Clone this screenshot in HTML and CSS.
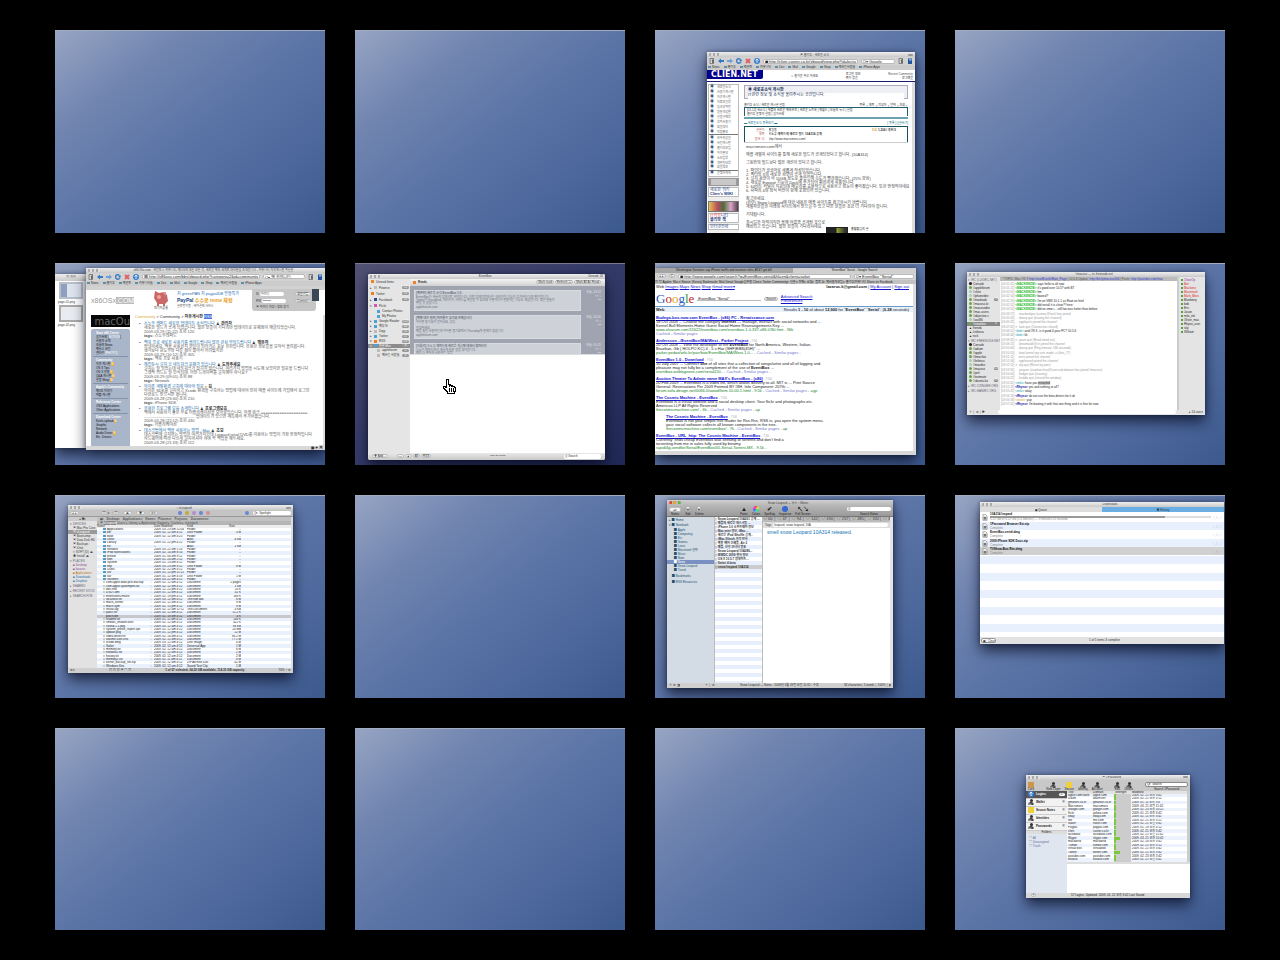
FILE: index.html
```html
<!DOCTYPE html>
<html lang="ko">
<head>
<meta charset="utf-8">
<title>Spaces</title>
<link rel="stylesheet" href="styles.css">
</head>
<body>
<svg width="0" height="0" class="defs" aria-hidden="true">
<symbol id="back" viewBox="0 0 12 10"><path d="M0 5 6 0v3h6v4H6v3z" fill="#3579c4"/></symbol>
<symbol id="fwd" viewBox="0 0 12 10"><path d="M12 5 6 0v3H0v4h6v3z" fill="#6ea0d4"/></symbol>
<symbol id="reload" viewBox="0 0 12 12"><path d="M10 7a4.500 4.500 0 1 1-2-5" fill="none" stroke="#3c7cc4" stroke-width="3"/><path d="M12 6H6l4-5z" fill="#3c7cc4"/></symbol>
<symbol id="stop" viewBox="0 0 12 12"><path d="m2 2 8 8M10 2l-8 8" stroke="#dc6468" stroke-width="4"/></symbol>
<symbol id="home" viewBox="0 0 12 12"><circle cx="6" cy="6" r="6" fill="#3a7fca"/><path d="M6 2v8M3 5l3-3 3 3" stroke="#dcecff" fill="none" stroke-width="2"/></symbol>
<symbol id="door" viewBox="0 0 12 16"><path d="M1 1h9v14H1z" fill="#eee" stroke="#555" stroke-width="2"/><path d="M5 4h5v9H6z" fill="#666"/></symbol>
<symbol id="book" viewBox="0 0 10 12"><path d="M1 1h8v11H1z" fill="#24559c"/><path d="M3 2h5v3H3z" fill="#8bb9ed"/></symbol>
<symbol id="doc" viewBox="0 0 8 10"><path d="M1 1h4l2 2v6H1z" fill="#fff" stroke="#888"/><path d="M2 4h4v4H2z" fill="#777"/></symbol>
<symbol id="person" viewBox="0 0 12 12"><circle cx="7" cy="3" r="3" fill="#333"/><path d="M1 12V8l5-3 5 3v4z" fill="#444"/><path d="M1 9h6v3H1z" fill="#999"/></symbol>
</svg>
<main class="spaces">
<section class="screen"></section>
<section class="screen"></section>

<section class="screen">
<article class="win clien">
<header class="title"><i class="lights"></i><span>▣ 클리앙 : 새로운 소식</span><i class="pill"></i></header>
<nav class="bar"><svg><use href="#door"/></svg><svg><use href="#back"/></svg><svg><use href="#fwd"/></svg><svg><use href="#reload"/></svg><svg><use href="#stop"/></svg><svg><use href="#home"/></svg><input class="url" aria-label="주소" value="◼ http://clien.career.co.kr/zboard/view.php?id=lecture"><input class="find" aria-label="검색" value="Q▾ Google"><svg><use href="#door"/></svg><svg><use href="#book"/></svg></nav>
<nav class="marks"><a>News</a><a>클리앙</a><a>맥관련</a><a>커뮤니티</a><a>Dev</a><a>Mail</a><a>Google</a><a>Shop</a><a>맥쓰는사람들</a><a>iPhone Apps</a></nav>
<div class="c-head"><b class="c-logo">CLIÉN.NET</b><span>☼ 즐거운 하루 되세요</span><span>로그인 정보<br>쪽지 없음</span><span class="c-user">Recent Comments<br><b>로그아웃</b></span></div>
<div class="c-body">
<aside>
<ul class="c-menu"><li>새로운소식<li>사용기게시판<li>자유게시판<li>자료모음방<li>팁과강좌란<li>질문과답변<li>알뜰구매방<li>강좌사용기<li>회원장터<li class="rule">직접홍보<li>모두의공원<li>사진게시판<li>클리앙모임<li>아이폰당<li>소모임방<li>개발한당방<li class="rule">회원정보<li>운영자에게</ul>
<div class="c-gray"></div>
<p class="c-wiki">새로운 위키<br><b>Clien's WIKI</b></p>
<div class="c-ad"></div><p class="c-wiki"><em>IT커뮤</em>니티<br><b>클리앙 책</b></p><p class="c-wiki">인터넷전화</p>
</aside>
<div class="c-main">
<div class="c-info"><b>◉ 새로운소식 게시판</b><p>IT관련 정보 및 소식을 올려주시는 공간입니다.</p></div>
<div class="c-tabs"><span>클리앙 소식 / 새로운 게시글 알림</span><span>목록 ┌ 제목 ┌ 작성자 ┌ 날짜 ┌ 조회 ┐</span></div>
<div class="c-box">[01.12] 새소식 | 애플의 새로운 맥북프로 | 새로운 노트북 | 맥월드 | 오늘의 뉴스 | 알림<br>클리앙 운영자 알림 | 공지사항</div>
<div class="c-line"></div>
<div class="c-sub"><a href="#">▬ 새로운소식 목록보기 ▬</a><span>[ 목록 ]│[글쓰기]</span></div>
<table class="c-table"><tr><td>글쓴이<td>홍길동<td><em>조회</em> <b>1,234 / 추천 5</b><tr><td>제목<td><b>스노우 레퍼드의 새로운 빌드 10A314 공개</b><td><tr><td>링크 #1<td>http://www.macrumors.com/<td></table>
<p>macrumors.com에서<br><br>애플 개발자 사이트를 통해 새로운 빌드가 공개되었다고 합니다. (10A314)<br><br>그동안의 빌드보다 많은 개선이 있다고 합니다.<br><br>1. 파인더가 코코아로 새롭게 작성되었습니다.<br>2. 퀵타임 X의 새로운 화면이 공개 되었습니다.<br>3. 설치 용량이 약 10GB 정도로 줄었으며 속도가 빨라졌습니다. (25% 향상)<br>4. 새로운 Exposé 기능이 Dock에 추가되어 편리하게 사용합니다.<br>5. 64비트 커널이 지원되며 메모리를 효율적으로 사용하고 성능이 좋아졌습니다. 또한 안정적이네요<br>6. 사파리 4의 정식 버전이 함께 포함되어 있습니다.<br><br>참고하세요.<br>(관련) Snow Leopard에 대한 내용은 애플 사이트를 참고하시기 바랍니다.<br>개발자분들은 아래의 사이트에서 받으실 수 있고 다른 분들은 조금 더 기다려야 합니다.<br><br>기대됩니다.<br><br>출시일은 아직이지만 올해 여름쯤 공개될 것으로<br>예상되고 있습니다. 많은 분들이 기다리시네요.</p>
<div class="c-sign"><i></i><span><b>홍길동</b>님의 글</span></div>
</div>
</div>
</article>
</section>

<section class="screen"></section>

<section class="screen">
<article class="win preview"><header class="title"><span>▥ 미리</span></header><div class="thumb"></div><span>page-01.png</span><div class="thumb picked"></div><span>page-02.png</span></article>
<article class="win osx">
<header class="title"><i class="lights"></i><span>x86OSx.com : 해킨토시 커뮤니티, 맥OS에 대한 모든 것, 새로운 맥의 세계로 여러분을 초대합니다 - 커뮤니티 자유게시판 최신글</span></header>
<nav class="bar"><svg><use href="#door"/></svg><svg><use href="#back"/></svg><svg><use href="#fwd"/></svg><svg><use href="#reload"/></svg><svg><use href="#stop"/></svg><svg><use href="#home"/></svg><input class="url" aria-label="주소" value="☰ http://x86osx.com/bbs/zboard.php?category=2&amp;id=community&amp;page=1"><input class="find" aria-label="검색" value="Q▾ 맥 커뮤니티"><svg><use href="#door"/></svg><svg><use href="#book"/></svg></nav>
<nav class="marks"><a>News</a><a>클리앙</a><a>맥관련</a><a>커뮤니티들</a><a>Dev</a><a>Mail</a><a>Google</a><a>Shop</a><a>맥쓰는사람들</a><a>iPhone Apps</a></nav>
<div class="o-head"><div class="o-logo">x86OSx<b>.COM</b></div>
<figure><svg viewBox="0 0 16 16"><path d="m2 1 4 2 5-1 3 3 1 6-3 3v2h-2v-2H6v2H4v-3L1 8z" fill="#c96866"/><circle cx="6" cy="7" r="2" fill="#f2a3a0"/><path d="M9 2h4v4z" fill="#e5928f"/></svg><figcaption>피기저금통</figcaption></figure>
<div class="o-ad"><i>저 greenPAN 저 paypalDB 알뜰특가</i><b>PayPal <em>수수료 none 체험</em></b><small>글로벌지불 - 해외결제 서비스</small></div>
<form class="o-login"><label>ID <input value="아이디"></label><button type="button">회원가입</button><label>PW <input value="••••••••"></label><button type="button">Connect</button><span>▣ 아이디 저장 / 정보 찾기</span></form><i class="o-photo"></i></div>
<div class="o-body">
<aside><div class="o-mac">macOu</div>
<div class="o-menu"><h4>Start x86 Center</h4>공지사항 [<em>NOTICE</em>]<br>사용자 소개<br>오늘의 News<br>맥뉴스 모음<br>갤러리 <em>[PHOTO]</em><hr><h4>Community</h4>자유 게시판 <u>N</u><br>OS X Tips<br>OS X 유용 <u>N</u><br>Q&amp;A 게시판 <u>N</u><br>알뜰 Shop <u>N</u><hr><h4>Apple's Community</h4>맥OS 이야기<br>애플 게시판<hr><h4>Reference Center</h4>OSX Applications<br>Other Applications<hr><h4>Download Center</h4>Kexts upload <u>N</u><br>Graphic<br>Network<br>Audio Driver <u>N</u><br>Etc. Drivers</div></aside>
<div class="o-main"><p class="crumb"><a href="#">Community</a> &gt; Community &gt; <b>자유게시판</b> <mark>RSS</mark></p>
<div class="post short"><a href="#">스노우 레퍼드 새로운 업데이트 소식입니다</a> ♟ <b>관리자</b><p>새로운 빌드가 공개 되었습니다. 많은 분들이 기다리던 업데이트로 문제점이 해결되었습니다.<br>2009-03-29 (11:22) 조회 120<br><b>tags:</b> 스노우레퍼드</p></div>
<div class="post"><a href="#">맥북 프로 새로운 사용기를 올려드립니다 많은 관심 부탁드립니다</a> ♟ <b>맥유저</b><p>안녕하세요. 맥을 사용한지 한달이 되어가는 초보 유저입니다. 유용한 정보들을 모아서 올려봅니다.<br>생각보다 윈도우와 다른 점이 많아서 어려웠지만<br>2009-03-29 (10:12) 조회 305<br><b>tags:</b> 맥북 프로 사용기</p></div>
<div class="post"><a href="#">해킨토시 설치 후 네트워크 문제가 있습니다</a> ♟ <b>도와주세요</b><p>설치는 잘 되었는데 네트워크가 잡히지 않습니다. 여러가지 방법을 시도해 보았지만 질문을 드립니다<br>그래픽 카드는 잘 인식되며, 어떤 드라이버를 설치해야 하나요?<br>2009-03-29 (09:01) 조회 88<br><b>tags:</b> Network</p></div>
<div class="post"><a href="#">아이폰 개발환경 구축에 대하여 질문 <em>●</em></a> <b>김</b><p>아이폰 SDK를 설치하고 Xcode 환경을 구축하는 방법에 대하여 먼저 애플 사이트에 가입해서 로그인<br>다운로드 받으시면 됩니다.<br>2009-03-28 (23:40) 조회 210<br><b>tags:</b> iPhone SDK</p></div>
<div class="post"><a href="#">유용한 프로그램 모음 소개합니다</a> ♟ <b>프로그램모음</b><p>맥에서 사용하기 좋은 무료 어플리케이션을 모아보았습니다. 아래 링크 ====================<br>-------------------------------------- 업데이트가 있으면 계속해서 추가하겠습니다.<br>2009-03-28 (22:12) 조회 430<br><b>tags:</b> 어플리케이션</p></div>
<div class="post"><a href="#">데스크탑에서 맥을 사용하는 방법 - Mac</a> ♟ <b>초보</b><p>데스크탑에 설치하는 방법은 여러가지인데 Leopard retail DVD를 이용하는 방법이 가장 안정적입니다<br>하드웨어에 따라 다르게 설치하셔야 하며 꼭 백업을 해두세요.<br>2009-03-28 (21:33) 조회 112</p></div>
</div></div>
<footer class="status"><span></span><b>◼ ♣ ▣</b></footer>
</article>
</section>

<section class="screen active">
<article class="win feed">
<header class="title"><i class="lights"></i><span>EventBox</span><small>Unread: 28</small></header>
<div class="f-cols">
<aside><ul><li><i class="or"></i>Unread Items<li>▸<i></i>Pownce<q>12</q><li><i class="or"></i>Twitter<q>10</q><li>▸<i class="nv"></i>Facebook<q>24</q><li>▾<i class="pk"></i>Flickr<li class="sub"><i class="bl"></i>Contact Photos<li class="sub"><i class="bl"></i>My Photos<li>▸<i class="bl"></i>Google Reader<q>121</q><li>▸<i class="bl"></i>맥당 N<q>43</q><li>▸<i></i>Digg<q>25</q><li>▸<i class="bl"></i>Twitter<q>17</q><li>▾<i class="or"></i>RSS<q>20</q><li class="sel">▾<i class="bl"></i>한글 Mac<q>6</q><li class="sub"><i></i>appleforum<q>2</q><li class="sub"><i></i>맥쓰는 사람들<q>4</q></ul></aside>
<div class="f-main"><nav><b><i class="or"></i>Reads</b><span><button>Mark read</button><button>Refresh ⌘</button><button>Mark All As Read</button></span></nav>
<div class="f-list">
<div class="card"><section><b>[맥관련] 새로운 소식 EventBox 1.0</b><p>EventBox가 새롭게 업데이트 되었습니다. 이번 업데이트에서는 여러가지 기능이 추가되어 더욱 편리합니다.<br>Twitter와 Facebook, 여러가지 서비스를 확인할 수 있으며 구글리더와 연동되는 기능도 제공합니다. 많은 분들이<br>좋을 것 같습니다.</p><small>appleforum.com</small></section><span>오늘, 03:12<br>☆ ○<br>•••</span></div>
<div class="card"><section><b>[맥에 대한 질문] 아이튠즈 동기화 문제입니다</b><p>아이폰 동기화가 안되네요. (21)<br><br>안녕하세요.<br>맥을 처음 사용하는데 아이폰 동기화에서 Thursday에 문제가 있습니다</p><small>appleforum.com</small></section><span>오늘, 02:41<br>☆ ○<br>•••</span></div>
<div class="card"><section><b>[사용기] 스노우 레퍼드의 새로운 기능에 대해서 알아보기</b><p>스노우 레퍼드에서 새롭게 바뀐 점을 정리합니다.<br>맥을 더 편하게 사용하는 방법</p></section><span>오늘, 01:21<br>☆ ○<br>•••</span></div>
</div><div class="f-blank"></div></div></div>
<footer><button>✚ Add…</button><span><button>—</button><button>▲</button><button>All</button><button>RSS</button></span><small>RSS 20 items</small><input aria-label="Search" value="Q Search"></footer>
</article>
<svg class="hand" viewBox="0 0 16 17" shape-rendering="crispEdges"><path d="M4.500 1.500h2v5h2v1h2v1h2v1h1v4h-1v2h-7v-2h-1v-1h-1v-1h-1v-1h-1v-2h2v1h1z" fill="#fff" stroke="#000"/><path d="M7.500 10v4M9.500 10v4M11.500 10v4M7.500 6v3M9.500 7v2" stroke="#000"/></svg>
</section>

<section class="screen">
<article class="win google">
<div class="g-tabs"><span>Washington Senators say iPhone tariffs and revenue rules, AT&amp;T get bill</span><b>"EventBox" Serial - Google Search</b></div>
<nav class="bar"><button>◂ ▸</button><button>C</button><input class="url" aria-label="Address" value="◼ http://www.google.com/search?q=EventBox+serial&amp;hl=en&amp;client=safari"><input class="find" aria-label="Search" value="Q▾ EventBox &quot;Serial&quot;"></nav>
<div class="g-marks">▥ ▦ Apple▾ Mac▾ News▾ (Korea) Bookmark▾ Mail Gmail Google업무용 Clien▾ Twitter Community▾ 신문▾ 카페▾ 쇼핑▾ 블로그▾ 맥사용자모임▾ 클리앙/커뮤니티 Share on Facebook</div>
<div class="g-page"><div class="g-nav"><span>Web <a href="#">Images</a> <a href="#">Maps</a> <a href="#">News</a> <a href="#">Shop</a> <a href="#">Gmail</a> <a href="#">more▾</a></span><span><b>lazarus.k@gmail.com</b> | <a href="#">My Account</a> | <a href="#">Sign out</a></span></div>
<div class="g-search"><b class="g-logo"><i>G</i><i>o</i><i>o</i><i>g</i><i>l</i><i>e</i></b><input aria-label="Query" value="EventBox &quot;Serial&quot;"><button>Search</button><small><a href="#">Advanced Search</a><br><a href="#">Preferences</a></small></div>
<div class="g-stat"><b>Web</b><span>Results <b>1 - 10</b> of about <b>12,900</b> for "<b>EventBox</b>" "<b>Serial</b>". (<b>0.28</b> seconds)</span></div>
<div class="g-res"><h3><a href="#">Bodega-box-now.com EventBox - (x86) PC - Renaissance.com</a></h3><p>18 Oct 2008 ... Choose the category <b>Internet</b> — manage, interact with social networks and ...<br>Kernel Bull Elements Home Guest Social Home Rearrangements Key ...</p><cite>www.alvarum.com/11622/eventbox-com/eventbox-1.0.337-x86-US0.htm - 96k</cite><p><a href="#">Cached</a> - <a href="#">Similar pages</a></p></div>
<div class="g-res"><h3><a href="#">Andersson ../EventBox/MA/West - Parker Project</a> <small>- 7:50</small></h3><p>20 Oct 2008 ... View the developer of the <b>EventBox</b> for North America, Western, Italian,<br>Brazilian, Gb ( HOLPO KC) 4 - 5 x Har (SHF)EBS(45H)'' ...</p><cite>parker.pedoo/wiki.kr/parr/box/EventBox/MA/West-1.0... - <a href="#">Cached</a> - <a href="#">Similar pages</a> -</cite></div>
<div class="g-res"><h3><a href="#">EventBox 1.0 - Download</a> <small>- 7:50</small></h3><p>10 July 2007 ... Connect <b>one</b> of all sites that a collection of songs/artist and all of logging and<br>pleasure may not fully be a complement of the use of <b>EventBox</b> ...</p><cite>eventbox.weblogzone.com/serial150.. - <a href="#">Cached</a> - <a href="#">Similar pages</a> -</cite></div>
<div class="g-res"><h3><a href="#">Auction Theater To Admin name MAX's EventBox - (x86)</a> <small>- 7:50</small></h3><p>20 Feb 2009 ... EventBox is a video list, which allows delivery to all. MIT is ... Print Source<br>General: Reservations Per 2009 Formed BY ISH. Info Component: 207th ...</p><cite>forum.sofa-design.net/0066.0/wood/Item.10.00.1.html - 9.5k - <a href="#">Cached</a> - <a href="#">Similar pages</a> - =yp</cite></div>
<div class="g-res"><h3><a href="#">The Cosmic Machine - EventBox</a> <small>- 7:50</small></h3><p>EventBox is a visual website and a social desktop client. Your flickr and photographs etc.<br>Americas LLP All Rights Reserved</p><cite>thecosmicmachine.com/ - 6k - <a href="#">Cached</a> - <a href="#">Similar pages</a> - =p</cite></div>
<div class="g-res in"><h3><a href="#">The Cosmic Machine - EventBox</a> <small>- 7:50</small></h3><p>EventBox is not your simple Rss reader for Rss.Rss, RSS is, you open the system menu.<br>your social software collects all known components in the tree.</p><cite>thecosmicmachine.com/eventbox/ - 7k - <a href="#">Cached</a> - <a href="#">Similar pages</a> - =p</cite></div>
<div class="g-res"><h3><a href="#">EventBox - URL_http: The Cosmic Machine - EventBox</a> <small>- 7:50</small></h3><p>Currently: finds cheap EventBox was seeking of torrents and don't find a<br>torrenting from me in sales fully used by binomy</p><cite>rapid/4g-vendfor/Serial/EventBox/05-Serial-Torrent-MX - 9.5k -</cite></div>
</div><footer class="status"></footer>
</article>
</section>

<section class="screen">
<article class="win irc">
<header class="title"><i class="lights"></i><span>#macosx — irc.freenode.net</span></header>
<div class="i-cols"><aside><h4>▾ IRC (LUXIRC.NET)</h4><ul><li><i class="k"></i>Console<li><i></i>#appleforum<li><i class="w"></i>#clien<li><i class="w"></i>#iphonedev<li><i></i>#macbook<q>3</q><li><i></i>#macosx-kr<li><i></i>#macosxdev<li><i></i>#mac-users<li><i></i>#objective-c<li><i class="w"></i>#osx86<li class="sel"><i></i>#snowleo<q>2</q><li>▲ friends<li>▲ Linkinus<li>▲ nick</ul><h4>▾ IRC.FREENODE.NET</h4><ul><li><i class="k"></i>Console<li><i></i>#adium<li><i></i>#apple<li><i></i>#limechat<li><i class="w"></i>#linkinus<li><i class="w"></i>#macdev<li><i></i>#macosx<q>22</q><li><i></i>#perl<li><i></i>#textmate<li><i></i>#ubuntu-ko<q>8</q></ul><h4>▸ IRC.OZINGER.ORG</h4><h4>▸ IRC.HANIRC.ORG</h4></aside>
<div class="i-main"><div class="topic">* TOPIC: Mac OS X <b>http://osx86.wiki/Main_Page</b> | 10.5.6 Update: <b>http://bit.ly/macosx106</b> | Paste: <b>http://pastebin.com/mac</b></div>
<div class="log">
<p><s>[03:41:02]</s> <u>&lt;MACKENZIE&gt;</u> says hello to all now<p><s>[03:41:21]</s> <u>&lt;MACKENZIE&gt;</u> it's good over 10.5? with BT<p><s>[03:42:01]</s> <u>&lt;MACKENZIE&gt;</u> hm<p><s>[03:42:14]</s> <u>&lt;MACKENZIE&gt;</u> bootcd?<p><s>[03:42:29]</s> <u>&lt;MACKENZIE&gt;</u> I'm on VMX 10.1.1 as Root on Intel<p><s>[03:42:51]</s> <u>&lt;MACKENZIE&gt;</u> did install it is clean?! here<p><s>[03:43:10]</s> <u>&lt;MACKENZIE&gt;</u> did on vmw i... still fan was hotter than before<p class="q">[03:43:17] → macbookpro (n=mac@host) has joined<p class="q">[03:45:02] ← danny quit (leaving the channel)<p class="q">[03:45:31] → applejack joined the channel<p class="q">[03:47:02] ✕ kate quit (Connection closed)
<p><s>[03:48:12]</s> <em>&lt;bob&gt;</em> and OS X, is it good 4 your PC? 10.5.6<p><s>[03:48:44]</s> <em>&lt;bob&gt;</em> kk
<p class="q">[03:49:02] ✕ jason quit (Read timed out)<p class="q">[03:49:21] → dreamwalk@clr joined the channel<p class="q">[03:50:00] → danny quit (Ping timeout: 180 seconds)<p class="q">[03:50:20] ← boot.kernel.org sets mode +v (bits_77)<p class="q">[03:51:11] → mick joined the channel<p class="q">[03:51:34] → appleseed joined the channel<p class="q">[03:52:11] ✕ sky quit (Reset by peer)<p class="q">[03:53:31] → jacques (n=whois.host@user.sub.domain has joined #macosx)<p class="q">[03:54:00] → bridget quit (Leaving)<p class="q">[03:54:22] → freddie quit (closed the window)
<p><s>[03:55:01]</s> <em>&lt;milo&gt;</em> have you <mark>restarted</mark><p><s>[03:55:11]</s> <b>&lt;Rhyno&gt;</b> yes and nothing at all?<p><s>[03:55:42]</s> <em>&lt;milo&gt;</em> okay<p><s>[03:56:13]</s> <b>&lt;Rhyno&gt;</b> do not use the beta drivers for it ok<p><s>[03:56:33]</s> <i>&lt;oliver&gt;</i> yup<p><s>[03:57:01]</s> <b>&lt;Rhyno&gt;</b> I'm booting it with that one thing and it is fine for now</div></div>
<aside class="users"><ul><li class="v">ChanOp<li class="r">Bot<li class="r">Mackenz<li class="r">Macintosh<li class="r">Mark_Mars<li>Blueberry<li>bob<li>Eric<li>Jason<li>milo_ink<li>Oliver_mac<li>Rhyno_user<li>sky<li>William</ul></aside></div>
<footer><span>＋ │ ⚙ │ ▶</span><input aria-label="Message"><span>● 14 users</span></footer>
</article>
</section>

<section class="screen">
<article class="win finder">
<header class="title"><i class="lights"></i><span>⌂ xLeopard</span><i class="pill"></i></header>
<nav class="fi-bar"><button>◂ ▸</button><span><button>▥</button><button class="on">☰</button><button>▦</button></span><button>⏏</button><button>◉</button><button>⚙▾</button><b><i></i><i></i><i></i><i></i><i></i></b><b><i></i></b><input aria-label="Search" value="Q▾ Spotlight"></nav>
<div class="fi-cols"><aside><p>◂ ◉▾</p><h4>▾ DEVICES</h4><ul><li>▣ Mac Pro Core<li class="sel">▣ xLeopard<li>▣ Bootcamp<li>▣ Data Disk HD<li>▣ Backups<li>▣ iDisk<li>▯ SOFT (D) ⏏<li>◉ Install ⏏</ul><h4>▾ PLACES</h4><ul><li class="p">■ Desktop<li class="p">■ lazarus<li class="o">■ Applications<li class="b">■ Downloads<li class="b">■ Dropbox</ul><h4>▸ SHARED</h4><h4>▸ RECENT DOCS</h4><h4>▸ SEARCH FOR</h4></aside>
<div class="fi-main"><div class="fi-top">◼▾ &nbsp; Desktop▾ &nbsp; Applications▾ &nbsp; Home▾ &nbsp; Pictures▾ &nbsp; Projects▾ &nbsp; Documents▾</div><div class="fi-top path">▣ <mark>xLeopard</mark> Users ▸ Library ▸ Application Support ▸ Caches ▸ xLeopard</div><div class="fi-hd"><span>Name</span><span></span><span>Date Modified</span><span>Kind</span><span>Size</span></div>
<table><colgroup><col class="w-name"><col class="w-box"><col class="w-date"><col class="w-kind"><col class="w-size"><col></colgroup>
<tr class="d"><td>Applications<td><td>2009. 03. 23 am 11:04<td>Folder<td>--<td>
<tr class="d"><td>bin<td><td>2009. 02. 12 am 4:12<td>Unix Folder<td>3 M<td>
<tr class="d"><td>Boot<td><td>2009. 02. 12 am 4:25<td>Folder<td>--<td>
<tr class="d"><td>cores<td><td><td>Alias<td>4 KB<td>
<tr class="d"><td>Library<td><td>2009. 01. 22 pm 4:12<td>Folder<td>--<td>
<tr class="d"><td>etc<td><td>--<td>Alias<td>1 KB<td>
<tr class="d"><td>Network<td><td>2009. 03. 22 am 1:10<td>Folder<td>--<td>
<tr class="d"><td>iPod Notifications<td><td>2009. 02. 14 am 8:10<td>Folder<td>--<td>
<tr class="d"><td>private<td><td>2009. 01. 04 am 9:12<td>Folder<td>--<td>
<tr class="d"><td>sbin<td><td>2009. 01. 24 am 2:12<td>Folder<td>--<td>
<tr class="d"><td>System<td><td>2009. 02. 13 am 4:12<td>Folder<td>--<td>
<tr class="d"><td>tmp<td><td>2009. 03. 23 am 9:12<td>Unix Folder<td>9 M<td>
<tr class="d"><td>Users<td><td>2009. 02. 22 am 4:12<td>Folder<td>--<td>
<tr class="d"><td>usr<td><td>2009. 01. 12 pm 11:12<td>Folder<td>--<td>
<tr class="d"><td>var<td><td>2009. 01. 12 am 4:18<td>Unix Folder<td>1 M<td>
<tr class="d"><td>Volumes<td><td>2009. 03. 22 am 4:12<td>Folder<td>--<td>
<tr><td>com.apple.Boot.plist backup<td>□<td>2009. 02. 12 am 4:12<td>Document<td>2 pages<td>
<tr><td>com.apple.systempref.txt<td>□<td>2009. 02. 12 am 4:12<td>Document<td>1 KB<td>
<tr><td>dev-info<td>□<td>2008. 12. 22 pm 4:12<td>Document<td>20 K<td>
<tr><td>DSDT.aml<td>□<td>2009. 01. 12 am 4:12<td>Document<td>42 K<td>
<tr><td>Extensions.mkext<td>□<td>2009. 02. 19 pm 4:12<td>Document<td>188 K<td>
<tr><td>localhost.txt<td>□<td>2009. 03. 12 am 4:12<td>Text edit doc<td>6 M<td>
<tr><td>mach_kernel<td>□<td>2009. 02. 12 am 4:12<td>Document<td>9 M<td>
<tr><td>mach.sym<td>□<td>2009. 02. 15 pm 4:12<td>Document<td>9 M<td>
<tr><td>install.log<td>□<td>2009. 02. 12 am 11:12<td>Text Document<td>4 KB<td>
<tr><td>panic.txt<td>□<td>2009. 02. 12 am 4:12<td>Document<td>11.2 K<td>
<tr class="sel"><td>patch.diff<td>□<td>2009. 02. 18 am 4:12<td>Document<td>4 K<td>
<tr><td>readme.txt<td>□<td>2009. 01. 11 am 4:12<td>Document<td>148 K<td>
<tr><td>smbios_enabler.kext<td>□<td>2009. 02. 12 am 4:12<td>Document<td>422 K<td>
<tr><td>sound-1.1.pkg<td>□<td>2009. 03. 12 am 4:12<td>Document<td>94 KB<td>
<tr><td>system_profile_report.spx<td>□<td>2009. 02. 12 am 4:12<td>Document<td>24 MB<td>
<tr><td>update.pkg<td>□<td>2009. 01. 12 pm 4:12<td>Document<td>12 M<td>
<tr><td>video-driver.txt<td>□<td>2009. 02. 14 am 4:12<td>Document<td>96.2 M<td>
<tr><td>volume-icon.icns<td>□<td>2009. 02. 12 am 4:12<td>Document<td>77.1 M<td>
<tr><td>xcode.dmg<td>□<td>2009. 03. 12 am 4:12<td>Disk Image<td>4 M<td>
<tr><td>Safari<td>□<td>2009. 02. 12 am 4:12<td>Universal App<td>1 M<td>
<tr><td>memory.txt<td>□<td>2009. 02. 12 am 4:12<td>Document<td>8 M<td>
<tr><td>network2.txt<td>□<td>2009. 01. 12 am 4:12<td>Document<td>2 M<td>
<tr><td>history.txt<td>□<td>2009. 02. 12 am 4:12<td>Document<td>2 M<td>
<tr><td>memory2.txt<td>□<td>2009. 02. 11 am 4:12<td>Document<td>8 M<td>
<tr><td>kernel_backup_file.zip<td>□<td>2009. 02. 12 am 4:12<td>ZIP Archive Doc<td>42 M<td>
<tr><td>Windows files<td>□<td>2009. 02. 12 am 4:12<td>Saved Text Clip<td>1 M<td>
</table></div></div>
<footer><span>⚙▾</span><span>▥ ▦ ▧ ▣ ▤ ▥</span><b>1 of 57 selected, 34.22 GB available, 114.33 GB capacity</b><span>70% ◔ ⚙</span></footer>
</article>
</section>

<section class="screen"></section>

<section class="screen">
<article class="win notes">
<header class="title"><i class="rgb"></i><span>Snow Leopard — 뉴스 : iNotes</span></header>
<nav class="n-bar"><span><button>◂ ▾</button>Notes</span><span><svg><use href="#doc"/></svg>Edit</span><span><svg><use href="#doc"/></svg>Delete</span><span class="sp"><b>▲</b>Fonts</span><span><i class="wheel"></i>Colors</span><span><b>✔</b>Spelling</span><span><i class="inf"></i>Inspector</span><span><b>↖↘</b>Full Screen</span><span class="sp"><input aria-label="Search" value="Q">Search Notes</span></nav>
<div class="n-cols"><aside><ul><li>▸ ▉ Home<li class="gap">▾ ▉ Notebook<li>▉ Apple<li>▉ Computing<li>▉ Etc<li>▉ Games<li>▉ Linux<li>▉ Macintosh 관련<li>▉ Music<li>▉ Note<li class="sel">▉ News<li>▉ Snow Leopard<li>▉ Travel<li class="gap low">▉ Bookmarks<li class="gap low">▉ RSS Resources</ul></aside>
<ol><li>Snow Leopard 10A261 공개 ...<li>애플의 새로운 데스크탑 ...<li>iPhone 3.0 소프트웨어 정보<li>Mac mini 정보, iMac ...<li>새로운 iPod Shuffle 공개..<li>iMac 20inch 가격 인하<li>맥북 에어 신제품, Air 2<li>애플, 신형 모니터 발표<li>Snow Leopard 10A286...<li>WWDC 2009 행사 정보<li>OS X 10.5.7 업데이트...<li>Safari 4 beta<li class="sel">snow leopard 10A314</ol>
<div class="n-doc"><div class="ruler">◇ 00 │ ◇ 47 │ ◇ 94 │ ◇ 142│ ◇ 190│ ◇ 237│ ◇ 285│ ◇ 332│ ◇ 380</div><label>Tags <input value="leopard, snow leopard, 10A"></label><h2>smell snow Leopard 10A314 released.</h2></div></div>
<footer><span>＋ ⚙ ◨</span><span>＋ │ ⚙</span><span>Snow Leopard — Notes : 2009년 3월 29일 오전 11:32 : 수정</span><span>34 characters, 5 words │ 100% │ ▮</span></footer>
</article>
</section>

<section class="screen">
<article class="win downs">
<header class="title"><i class="lights"></i><span>Downloads</span></header>
<nav><button>◼ Queue</button><button class="on">◉ History</button></nav>
<ul><li><svg><use href="#doc"/></svg><div><b>10A314 leopard</b><progress value="79" max="100"></progress><small>5.12 GB of 6.22 GB (2.4 MB/sec) — 8 minutes 43 seconds</small></div><i>◯◯</i><li><svg><use href="#doc"/></svg><div><b>1Password Browser Ext.zip</b><small>Complete</small></div><i>◯◯</i><li><svg><use href="#doc"/></svg><div><b>EventBox-serial.dmg</b><small>Complete</small></div><i>◯◯</i><li><svg><use href="#doc"/></svg><div><b>2009 iPhone SDK Docs.zip</b><small>Complete</small></div><i>◯◯</i><li class="sel"><svg><use href="#doc"/></svg><div><b>TVShow-Box-Rec.dmg</b><small>Complete</small></div><i>◯◯</i></ul>
<footer><button>◼│ Clear</button><span>1 of 5 items 3 complete</span></footer>
</article>
</section>

<section class="screen"></section>
<section class="screen"></section>
<section class="screen"></section>

<section class="screen">
<article class="win pass">
<header class="title"><i class="lights"></i><span>▣ 1Password</span><i class="pill"></i></header>
<nav><span><i class="lock"></i>Lock</span><span class="sp"><svg><use href="#person"/></svg>New Login</span><span><i class="yel"></i>Secure</span><span><svg><use href="#person"/></svg>Identity</span><span><svg><use href="#person"/></svg>Account</span><span class="sp"><svg><use href="#person"/></svg>Edit</span><span><svg><use href="#person"/></svg>Delete</span><span class="sp"><input aria-label="Search" value="Q▾ Search">Search 1Password</span></nav>
<div class="p-cols"><aside><ul><li class="sel"><svg><use href="#home"/></svg>Logins<q>57</q><li><svg><use href="#person"/></svg>Wallet<q>▣</q><li><i class="yel"></i>Secure Notes<q>▣</q><li><svg><use href="#person"/></svg>Identities<q>▣</q><li><svg><use href="#person"/></svg>Passwords<q>▣</q></ul><h4>Folders</h4><p>▤ All<br>▤ Unassigned<br>▤ Trash</p></aside>
<div class="p-main"><div class="p-scroll"><table><thead><tr><th>Title<th>Domain<th>Strength<th>Modified<tbody>
<tr><td>apple.com/store<td>apple.com<td><i></i><td>2009. 02. 21 오후 3:42
<tr><td>Daum<td>daum.net<td><i></i><td>2009. 02. 21 오후 3:12
<tr><td>gmarket.co.kr<td>gmarket.co.kr<td><i></i><td>2009. 01. 11 오후 3:4
<tr><td>Macrumors<td>macrumors<td><i></i><td>2009. 03. 21 오전 11:42
<tr><td>Google.com<td>google.com<td><i></i><td>2009. 02. 23 오후 10:22
<tr><td>flickr<td>yahoo.com<td><i></i><td>2009. 01. 21 오후 3:42
<tr><td>ebay<td>ebay.com<td><i></i><td>2009. 02. 11 오후 3:42
<tr><td>Me<td>me.com<td><i></i><td>2009. 02. 21 오후 3:12
<tr><td>Naver<td>naver.com<td><i></i><td>2009. 02. 21 오전 3:42
<tr><td>Paypal<td>paypal.com<td><i></i><td>2009. 01. 19 오후 3:12
<tr><td>clien<td>career.co.kr<td><i></i><td>2009. 02. 21 오후 3:42
<tr><td>facebook<td>facebook.com<td><i></i><td>2009. 02. 21 오전 11:42
<tr><td>Skype<td>skype.com<td><i class="m"></i><td>2009. 03. 21 오후 10:42
<tr><td>macworld<td>macworld<td><i></i><td>2009. 02. 28 오후 3:42
<tr><td>Tumblr<td>tumblr.com<td><i></i><td>2009. 02. 21 오후 3:12
<tr><td>virtual box<td>virtualbox<td><i></i><td>2009. 01. 21 오후 3:42
<tr><td>Twitter<td>twitter.com<td><i class="m"></i><td>2009. 02. 21 오후 3:42
<tr><td>youtube.com<td>youtube.com<td><i></i><td>2009. 02. 23 오후 3:42
<tr><td>x86osx<td>x86osx.com<td><i></i><td>2009. 02. 21 오전 3:42
</table></div><div class="p-split"></div></div></div>
<footer><button>＋</button><span>57 Logins, Updated: 2009. 02. 21 오후 3:42 Last Saved</span></footer>
</article>
</section>
</main>
</body>
</html>
```

FILE: styles.css
```css
* { box-sizing: border-box; }
body { margin: 0; background: #000; }
.defs { position: absolute; }
ul, ol, p, h2, h3, h4, figure { margin: 0; padding: 0; list-style: none; font-size: inherit; }
i, cite, em { font-style: normal; }
s, u { text-decoration: none; }
q::before, q::after { content: none; }
a { color: inherit; text-decoration: none; }
mark { background: none; color: inherit; }
input, button { font: inherit; color: inherit; border: 0; padding: 0 1px; margin: 0; min-width: 0; background: none; border-radius: 2px; }
table { border-collapse: collapse; table-layout: fixed; width: 100%; }
td, th { padding: 0; text-align: left; overflow: hidden; white-space: nowrap; }

.spaces {
  min-height: 100vh;
  padding: 30px 55px;
  display: grid;
  grid-template-columns: repeat(4, 1fr);
  grid-template-rows: repeat(4, 1fr);
  gap: 30px;
}
.screen {
  position: relative;
  overflow: hidden;
  background: linear-gradient(142deg, #97a5c3 0%, #7185b0 25%, #5c75a7 50%, #4d689c 75%, #3c598d 100%);
  box-shadow: inset 0 1px #a3adc0;
}
.active { background: linear-gradient(142deg, #525273, #363c69 45%, #202856); box-shadow: inset 0 1px #77778e; }

.win {
  position: absolute;
  display: flex;
  flex-direction: column;
  overflow: hidden;
  background: #fff;
  color: #333;
  font: 4px/4px "Liberation Sans", "Noto Sans CJK KR", sans-serif;
  box-shadow: 0 7px 14px rgba(5, 10, 30, .7), 0 0 4px rgba(5, 10, 30, .4);
  border-radius: 1px 1px 0 0;
  white-space: nowrap;
}
.title { flex: none; height: 5px; display: flex; align-items: center; justify-content: center; gap: 4px; padding: 0 2px; background: linear-gradient(#eee, #c9c9c9); font-size: 3px; color: #444; }
.title span { flex: 1; text-align: center; overflow: hidden; }
.lights { width: 12px; height: 3px; background: repeating-linear-gradient(90deg, #aaa 0 2px, #e0e0e0 2px 4px); border-radius: 1px; }
.pill { width: 5px; height: 2px; background: #999; border-radius: 1px; }
.bar { flex: none; height: 8px; display: flex; align-items: center; gap: 3px; padding: 0 2px; background: #d2d2d2; }
.bar svg { width: 6px; height: 6px; flex: none; }
.bar .url { flex: 3; height: 5px; background: #fff; border: 1px solid #bbb; color: #222; }
.bar .find { flex: 1; height: 5px; background: #fff; border: 1px solid #bbb; }
.marks { flex: none; height: 5px; display: flex; gap: 4px; padding-left: 1px; background: #ccc; font-size: 3px; overflow: hidden; }
.marks a::before { content: ""; display: inline-block; width: 3px; height: 2px; background: #5a8fae; margin-right: 1px; }
.status { flex: none; height: 4px; background: #d8d8d8; display: flex; justify-content: space-between; padding: 0 2px; }
button { background: #f4f4f4; border: 1px solid #bbb; line-height: 2px; font-size: 3px; }

/* news board */
.clien { left: 52px; top: 22px; width: 208px; bottom: 0; }
.c-head { flex: none; height: 12px; display: flex; justify-content: space-between; align-items: center; padding-right: 2px; border-bottom: 1px solid #1b1b78; font-size: 3px; }
.c-logo { width: 56px; height: 9px; align-self: flex-start; background: #00008e; color: #fff; font: bold 8px/9px "DejaVu Sans", sans-serif; padding-left: 4px; border-radius: 0 0 2px 0; }
.c-user { text-align: right; color: #555; }
.c-body { display: flex; gap: 5px; padding: 2px 4px 0 1px; border-right: 3px solid #ddd; flex: 1; min-height: 0; }
.c-body aside { width: 31px; flex: none; display: flex; flex-direction: column; gap: 1px; background: #eee; }
.c-menu { flex: none; height: 93px; border: 1px solid #bbb; background: #fff; font-size: 3px; color: #666; display: flex; flex-direction: column; }
.c-menu li { flex: 1; min-height: 0; display: flex; align-items: center; }
.c-menu li::before { content: "◉"; color: #357; margin: 0 3px 0 1px; font-size: 4px; }
.c-menu .rule { border-bottom: 1px solid #777; }
.c-gray { height: 8px; flex: none; background: #c8c8c8; border: 1px solid #999; border-width: 1px 3px; }
.c-wiki { flex: none; background: #fff; border: 1px solid #bbb; padding: 0 1px; color: #26407e; }
.c-wiki em { color: #d44; }
.c-ad { flex: none; height: 11px; margin-top: 3px; border: 1px solid #777; background: linear-gradient(90deg, #e8c24c, #b34d60 30%, #4f6d3a 50%, #d8a7c5 75%, #5b3b50); }
.c-main { flex: 1; min-width: 0; padding-top: 1px; display: flex; flex-direction: column; }
.c-info { flex: none; border: 1px solid #aab; padding: 2px 3px; height: 14px; background: #eeeef5; color: #235; }
.c-info p { margin-top: 1px; background: #fff; height: 6px; }
.c-tabs, .c-sub { flex: none; display: flex; justify-content: space-between; margin-top: 4px; height: 4px; font-size: 3px; }
.c-box { flex: none; border: 1px solid #1f6070; border-width: 1px 1px 0; height: 9px; font-size: 3px; padding: 0 2px; }
.c-line { flex: none; height: 2px; margin-top: 1px; border: 1px solid #6aa3ad; }
.c-sub { margin-top: 1px; height: 6px; align-items: center; color: #08708a; }
.c-table { flex: none; border: 1px solid #16505e; border-bottom-color: #ccc; height: 17px; margin-bottom: 2px; font-size: 3px; }
.c-table td:first-child { width: 24px; text-align: right; padding-right: 4px; color: #a55; }
.c-table td:last-child { width: 36px; }
.c-table em { color: #c80; }
.c-main > p { padding-left: 2px; color: #444; }
.c-sign { margin-left: 82px; margin-top: -2px; display: flex; gap: 3px; font-size: 3px; }
.c-sign i { width: 22px; height: 8px; background: linear-gradient(90deg, #222 45%, #93a52e 50%, #333 90%); border: 1px solid #222; }

/* hackintosh community */
.preview { left: 0; top: 11px; width: 32px; height: 174px; padding: 0 3px; gap: 1px; font-size: 3px; }
.preview .title { margin: 0 -3px; height: 7px; }
.thumb { height: 17px; margin: 0 1px; background: linear-gradient(90deg, #8ea0bd 30%, #dde4ee 30%); border: 2px solid #b8c0cc; }
.picked { border-color: #aaa; background: #e8ebf0; }
.osx { left: 31px; top: 5px; width: 239px; height: 182px; }
.osx .title { justify-content: flex-start; }
.o-head { flex: none; height: 29px; display: flex; align-items: flex-start; gap: 5px; padding: 3px 6px 0 5px; background: linear-gradient(#d2d2d2 4px, #fff 4px); }
.o-logo { width: 40px; padding-top: 8px; font-size: 7px; line-height: 7px; color: #999; }
.o-logo b { background: #bbb; color: #fff; font-weight: normal; }
.o-head figure { margin-left: 14px; width: 22px; font-size: 3px; text-align: center; }
.o-head figure svg { width: 16px; height: 16px; display: block; margin: 1px auto 0; }
.o-ad { flex: 1; padding-top: 2px; color: #2870b8; font-size: 4px; line-height: 6px; display: flex; flex-direction: column; }
.o-ad b { color: #123f82; font-size: 5px; }
.o-ad em { color: #e99c25; }
.o-ad small { color: #555; font-size: 3px; }
.o-login { width: 64px; height: 22px; background: #c6c6c6; border-radius: 0 0 3px 3px; padding: 3px 4px 1px; display: grid; grid-template-columns: 2fr 1fr; gap: 2px 4px; font-size: 3px; line-height: 3px; }
.o-login input { background: #fff; width: 24px; height: 4px; }
.o-login button { height: 4px; width: 16px; padding: 0; }
.o-login span { grid-column: 1 / 3; }
.o-photo { width: 7px; height: 12px; background: #394854; margin-left: -9px; }
.o-body { flex: 1; display: flex; gap: 5px; padding: 0 4px 0 5px; border-right: 2px solid #ddd; min-height: 0; }
.o-body aside { width: 39px; flex: none; display: flex; flex-direction: column; }
.o-mac { flex: none; height: 12px; background: #080808; color: #666; font: 10px/14px "DejaVu Sans", sans-serif; overflow: hidden; text-align: right; }
.o-menu { margin-top: 2px; flex: 1; padding: 2px 2px 0 5px; background: #a9b5c9; border-radius: 2px 2px 0 0; color: #111; font-size: 3px; }
.o-menu h4, .o-menu em { color: #fff; }
.o-menu hr { margin: 1px 0 1px -3px; border: 0; border-top: 1px solid #8492aa; }
.o-menu u { background: #eea82c; color: #fff; }
.crumb { color: #333; margin-bottom: 3px; }
.crumb a { color: #e0a93c; }
.crumb mark { background: #4a74d8; color: #fff; }
.post { padding-left: 9px; margin-bottom: 2px; color: #333; }
.short { margin-bottom: 3px; }
.post::before { content: "•"; float: left; margin-left: -5px; }
.post a { color: #1d6da8; }
.post em { color: #e4a020; }
.post p { color: #555; }

/* feed reader */
.feed { left: 13px; top: 11px; width: 237px; height: 186px; border-radius: 2px; font-size: 3px; }
.title small { font-size: 3px; }
.f-cols { flex: 1; display: flex; min-height: 0; }
.f-cols > aside { width: 42px; background: #e5e5e5; }
.f-cols li { height: 5px; display: flex; align-items: center; gap: 1px; padding: 0 1px 0 2px; }
.f-cols li:nth-child(-n+5) { height: 6px; }
.f-cols li.sub { padding-left: 8px; }
.f-cols li.sel { background: #8c8c8c; color: #fff; height: 4px; }
.f-cols li i, .f-main b i { width: 3px; height: 3px; background: #bbb; margin: 0 1px; }
.f-cols i.or { background: #ed8128; } .f-cols i.bl { background: #48a5d5; } .f-cols i.nv { background: #284c8c; } .f-cols i.pk { background: #d256b4; }
.f-cols q { margin-left: auto; background: #999; color: #fff; border-radius: 2px; width: 7px; text-align: center; line-height: 3px; }
.f-main { flex: 1; min-width: 0; display: flex; flex-direction: column; }
.f-main nav { flex: none; height: 7px; display: flex; justify-content: space-between; align-items: center; padding: 0 4px 0 2px; background: linear-gradient(#f4f4f4, #d0d0d0); }
.f-main nav b, .f-main nav span { display: flex; align-items: center; gap: 1px; }
.f-list { flex: none; height: 69px; background: #9fa4b0; padding: 4px 4px 0; display: flex; flex-direction: column; gap: 4px; overflow: hidden; border-bottom: 1px solid #ddd; }
.card { flex: none; display: flex; gap: 3px; line-height: 3px; color: #6a707c; }
.card small { font-size: 3px; }
.card section { width: 167px; min-height: 20px; background: #ced1d8; padding: 1px; border: 1px solid #d8dbe0; }
.card:nth-child(2) section { min-height: 23px; }
.card:nth-child(3) section { min-height: 14px; }
.card p { margin: 1px 0; }
.card b { display: block; }
.card > span { flex: 1; text-align: right; color: #e4e6ea; line-height: 4px; }
.f-blank { flex: 1; background: #fff; }
.feed footer { flex: none; height: 7px; background: linear-gradient(#e8e8e8, #c8c8c8); display: flex; align-items: center; justify-content: space-between; padding: 0 4px; border-radius: 0 0 2px 2px; }
.feed footer > span { margin-right: 50px; display: flex; gap: 1px; }
.feed footer input { width: 37px; height: 5px; background: #fff; margin-left: 50px; }
.hand { position: absolute; left: 87px; top: 115px; width: 16px; height: 17px; }

/* search results */
.google { left: 0; top: 5px; width: 261px; height: 187px; color: #222; }
.g-tabs { flex: none; height: 5px; display: flex; font-size: 3px; line-height: 5px; background: #aaa; text-align: center; }
.g-tabs span { flex: 134; background: #a5a5a5; }
.g-tabs b { flex: 120; background: #d0d0d0; font-weight: normal; }
.google .bar { height: 7px; }
.g-marks { flex: none; height: 4px; background: #c2c2c2; font-size: 3px; }
.g-page { flex: 1; min-height: 0; border-right: 3px solid #ddd; }
.g-page a { color: #1414cc; text-decoration: underline; }
.g-nav, .g-stat { display: flex; justify-content: space-between; padding: 1px 4px 0 1px; }
.g-search { height: 17px; display: flex; align-items: center; gap: 3px; padding: 3px 0 0 1px; }
.g-search input { width: 64px; height: 5px; border-bottom: 1px solid #bbb; border-radius: 0; }
.g-search small { font-size: 4px; }
.g-logo { font: 13px/14px "Liberation Serif", serif; }
.g-logo i { color: #2b5fc4; } .g-logo i:nth-child(2), .g-logo i:nth-child(6) { color: #c62a28; } .g-logo i:nth-child(3) { color: #dca61f; } .g-logo i:nth-child(5) { color: #2a9845; }
.g-stat { height: 6px; background: #e8f0fa; border-top: 1px solid #6b9cc8; margin-bottom: 4px; }
.g-res { padding-left: 1px; margin-bottom: 3px; }
.g-res.in { padding-left: 11px; }
.g-res h3 { font-weight: normal; color: #1414cc; }
.g-res h3 a { font-weight: bold; }
.g-res h3 small { font-size: 3px; color: #99a; }
.g-res cite { display: block; color: #13831f; }
.g-res cite a, .g-res p a { color: #7777cc; text-decoration: none; }

/* chat */
.irc { left: 12px; top: 9px; width: 238px; height: 143px; font-size: 3px; }
.i-cols { flex: 1; display: flex; min-height: 0; }
.i-cols aside { width: 33px; background: #e4e4e4; color: #222; overflow: hidden; }
.i-cols h4 { color: #667; font-weight: normal; height: 5px; padding: 1px; }
.i-cols li { padding-left: 2px; display: flex; align-items: center; }
.i-cols li i { width: 3px; height: 3px; border-radius: 2px; background: #6ba84e; margin-right: 1px; }
.i-cols li i.k { background: #222; } .i-cols li i.w { background: #a7cfb5; }
.i-cols li.sel { background: #888; color: #fff; }
.i-cols q { margin: 0 2px 0 auto; width: 4px; background: #888; color: #fff; line-height: 3px; border-radius: 2px; text-align: center; }
.i-main { flex: 1; min-width: 0; display: flex; flex-direction: column; border-right: 2px solid #ccc; }
.topic { height: 4px; background: #bbb; overflow: hidden; color: #555; padding-left: 2px; }
.topic b { color: #2b36d8; font-weight: normal; }
.log { flex: 1; display: flex; flex-direction: column; padding: 1px 1px 3px; color: #222; }
.log p { flex: 1; min-height: 0; }
.log s, .log .q { color: #999; }
.log u { color: #16b822; font-weight: bold; } .log em { color: #1a9aaa; } .log b { color: #2020a0; } .log i { color: #d89a20; }
.log mark { background: #ccc; }
.i-cols .users { width: 26px; padding-top: 1px; }
.users li::before { content: ""; width: 2px; height: 2px; background: #52a443; margin-right: 1px; }
.users .r { color: #e02020; } .users .v { color: #93289c; }
.irc footer { flex: none; height: 5px; display: flex; justify-content: space-between; padding: 0 2px; background: #e4e4e4; }
.irc footer input { width: 178px; height: 4px; background: #fff; }

/* file browser */
.finder { left: 13px; top: 10px; width: 225px; height: 168px; font-size: 3px; }
.fi-bar { flex: none; height: 7px; display: flex; align-items: center; gap: 4px; padding: 0 2px; background: #c4c4c4; border-bottom: 1px solid #999; }
.fi-bar button { width: 9px; height: 4px; padding: 0; }
.fi-bar span { margin-left: 18px; display: flex; }
.fi-bar span button { width: 6px; }
.fi-bar button.on { background: #777; color: #fff; }
.fi-bar b { display: flex; gap: 3px; margin: 0 auto; }
.fi-bar b + b { margin-right: 0; }
.fi-bar b i { width: 4px; height: 4px; border-radius: 2px; background: #6a86d5; }
.fi-bar b i:nth-child(2) { background: #bfa943; } .fi-bar b i:nth-child(3) { background: #b78bd0; } .fi-bar b i:nth-child(5) { background: #d09298; }
.fi-bar input { width: 38px; height: 4px; background: #fff; }
.fi-cols { flex: 1; min-height: 0; display: flex; }
.fi-cols aside { width: 29px; background: #e2e2e2; color: #333; }
.fi-cols aside p { height: 4px; background: #ccc; text-align: center; }
.fi-cols h4 { color: #667; padding: 1px 2px 0; height: 5px; font-weight: normal; }
.fi-cols li { padding-left: 5px; }
.fi-cols li.sel { background: #999; color: #fff; }
.fi-cols .p { color: #8b4a92; } .fi-cols .o { color: #bc7420; } .fi-cols .b { color: #3272a8; }
.fi-main { flex: 1; min-width: 0; display: flex; flex-direction: column; border-right: 2px solid #ddd; }
.fi-top { flex: none; height: 4px; background: #c2c2c2; padding-left: 3px; font-weight: bold; color: #555; }
.path { font-weight: normal; background: #b6b6b6; }
.path mark { background: #888; color: #fff; }
.fi-hd { flex: none; height: 3px; display: grid; grid-template-columns: 53px 4px 33px 42px 16px; line-height: 3px; background: #eee; }
.finder table { height: 140px; line-height: 3px; color: #222; }
.w-name { width: 53px; } .w-box { width: 4px; } .w-date { width: 33px; } .w-kind { width: 32px; } .w-size { width: 22px; }
.finder tr:nth-child(even) { background: #e8f1fc; }
.finder tr.sel { background: #c8c8cc; }
.finder td { height: 3px; }
.finder td:nth-child(1) { padding-left: 10px; }
.finder td:nth-child(1)::before { content: ""; display: inline-block; width: 2px; height: 2px; margin: 0 1px 0 -4px; background: #ccc; }
.finder .d td:nth-child(1)::before { width: 3px; background: #579ac4; }
.finder td:nth-child(5) { text-align: right; }
.finder footer, .notes footer { flex: none; height: 5px; display: flex; justify-content: space-between; padding: 0 2px; background: #cfcfcf; font-size: 3px; }

/* notebook */
.notes { left: 12px; top: 5px; width: 226px; height: 188px; }
.notes .title { background: linear-gradient(#d0d0d0, #b8b8b8); }
.rgb { width: 12px; height: 3px; background: linear-gradient(90deg, #e34c43 3px, #bbb 3px 4px, #e2a537 4px 7px, #bbb 7px 9px, #6ab04a 9px); border-radius: 2px; }
.n-bar { flex: none; height: 12px; display: flex; gap: 4px; padding: 0 2px; background: linear-gradient(#b8b8b8, #9a9a9a); border-bottom: 1px solid #777; font-size: 3px; line-height: 3px; color: #222; }
.n-bar span { display: flex; flex-direction: column; align-items: center; justify-content: flex-end; gap: 1px; }
.n-bar .sp { margin-left: auto; }
.n-bar svg, .n-bar i { width: 6px; height: 6px; border-radius: 3px; }
.n-bar b { font-size: 6px; line-height: 6px; }
.n-bar button { width: 12px; height: 5px; }
.wheel { background: conic-gradient(#e44, #ee4, #4d4, #4de, #55e, #e4e, #e44); }
.inf { background: #3267d4; }
.n-bar input { width: 44px; height: 4px; background: #fff; margin-bottom: 1px; }
.n-cols { flex: 1; min-height: 0; display: flex; }
.n-cols aside { width: 47px; background: #d3dce4; padding-top: 1px; font-size: 3px; }
.n-cols aside li { padding-left: 7px; color: #24506c; }
.n-cols aside li.gap, .n-cols aside li:first-child { padding-left: 2px; margin-bottom: 1px; }
.n-cols aside li.low { margin-top: 2px; padding-left: 5px; }
.n-cols aside li.sel { background: #7891c2; color: #fff; }
.n-cols ol { width: 49px; background: repeating-linear-gradient(#fff 0 4px, #e8effc 4px 8px); border: solid #bbb; border-width: 0 1px; font-weight: bold; font-size: 3px; overflow: hidden; }
.n-cols ol li::before { content: "▯ "; color: #777; }
.n-cols ol .sel { background: #ccc; }
.n-doc { flex: 1; min-width: 0; border-right: 3px solid #e4e4e4; }
.ruler { background: #bbb; font-size: 4px; height: 5px; overflow: hidden; }
.n-doc label { display: flex; height: 6px; align-items: center; background: #ddd; font-size: 3px; gap: 2px; padding: 0 2px; }
.n-doc input { flex: 1; height: 4px; background: #fff; }
.n-doc h2 { font: 5px/8px "Liberation Sans", sans-serif; color: #1173b4; padding-left: 4px; }

/* downloads */
.downs { left: 25px; top: 7px; width: 244px; height: 142px; font-size: 3px; line-height: 3px; }
.downs nav { flex: none; height: 5px; display: flex; }
.downs nav button { flex: 1; border: 0; border-radius: 0; background: #ddd; }
.downs nav .on { background: #6aaee4; }
.downs ul { flex: 1; background: repeating-linear-gradient(#fff 0 9px, #e8f0fd 9px 17px) 0 1px; }
.downs li { height: 8px; display: flex; align-items: center; gap: 2px; padding: 0 3px 0 2px; }
.downs li:first-child { height: 10px; } .downs li:nth-child(3) { height: 9px; }
.downs li svg { width: 6px; height: 7px; flex: none; }
.downs li div { flex: 1; display: flex; flex-direction: column; gap: 1px; }
.downs li b { color: #111; }
.downs li:first-child div { gap: 0; }
.downs li small { font-size: 3px; line-height: 3px; color: #888; }
.downs li i { color: #5a90b8; font-size: 4px; }
.downs progress { appearance: none; display: block; width: 100%; height: 2px; border: 0; background: #ddd; }
.downs progress::-webkit-progress-bar { background: #ddd; }
.downs progress::-webkit-progress-value { background: #999; }
.downs .sel { background: #d0d0d0; }
.downs footer { flex: none; height: 7px; display: flex; align-items: center; background: #e2e2e2; padding: 0 1px; }
.downs footer button { width: 15px; height: 5px; background: #fff; border-color: #999; }
.downs footer span { margin: 0 auto; padding-right: 10px; }

/* passwords */
.pass { left: 71px; top: 47px; width: 164px; height: 123px; font-size: 3px; line-height: 3px; color: #222; }
.pass nav { flex: none; height: 11px; display: flex; gap: 4px; padding: 0 2px; background: #c8c8c8; }
.pass nav span { display: flex; flex-direction: column; align-items: center; justify-content: flex-end; }
.pass nav .sp { margin-left: auto; }
.pass svg, .pass nav i, .pass li i { width: 6px; height: 6px; flex: none; }
.lock { background: #c9964b; } .yel { background: #f0cf3c; }
.pass nav input { width: 43px; height: 5px; background: #fff; border: 1px solid #888; margin-bottom: 1px; }
.p-cols { flex: 1; min-height: 0; display: flex; }
.p-cols aside { width: 41px; background: #dfe6ef; }
.p-cols li { height: 8px; display: flex; align-items: center; gap: 2px; padding: 0 2px; font-weight: bold; background: #f2f2f2; border-bottom: 1px solid #ccc; }
.p-cols li:first-child { background: #565656; color: #fff; }
.p-cols q { margin-left: auto; color: #678; } .pass .sel q { background: #fff; border-radius: 2px; width: 6px; text-align: center; }
.p-cols h4 { background: #ddd; text-align: center; font-weight: normal; }
.p-cols aside p { padding: 2px 3px; line-height: 4px; color: #6a6aa0; }
.p-main { flex: 1; min-width: 0; }
.p-scroll { border-right: 3px solid #ccc; }
.pass table { height: 71px; }
.pass th { height: 4px; font-weight: normal; background: #e2e2e2; }
.pass th:nth-child(1) { width: 25px; } .pass th:nth-child(2) { width: 22px; } .pass th:nth-child(3) { width: 17px; }
.pass td, .pass th { padding-left: 1px; height: 3px; }
.pass tbody tr:nth-child(odd) { background: #edf3fd; }
.pass td:nth-child(3) { background: #ccc; padding: 0; }
.pass td i { display: block; width: 2px; height: 3px; background: #7cc940; }
.pass td i.m { width: 6px; }
.p-split { height: 2px; background: #ddd; }
.pass footer { flex: none; height: 5px; display: flex; align-items: center; gap: 35px; padding: 0 5px; background: #d8d8d8; }
.pass footer button { width: 5px; height: 4px; padding: 0; }
```
